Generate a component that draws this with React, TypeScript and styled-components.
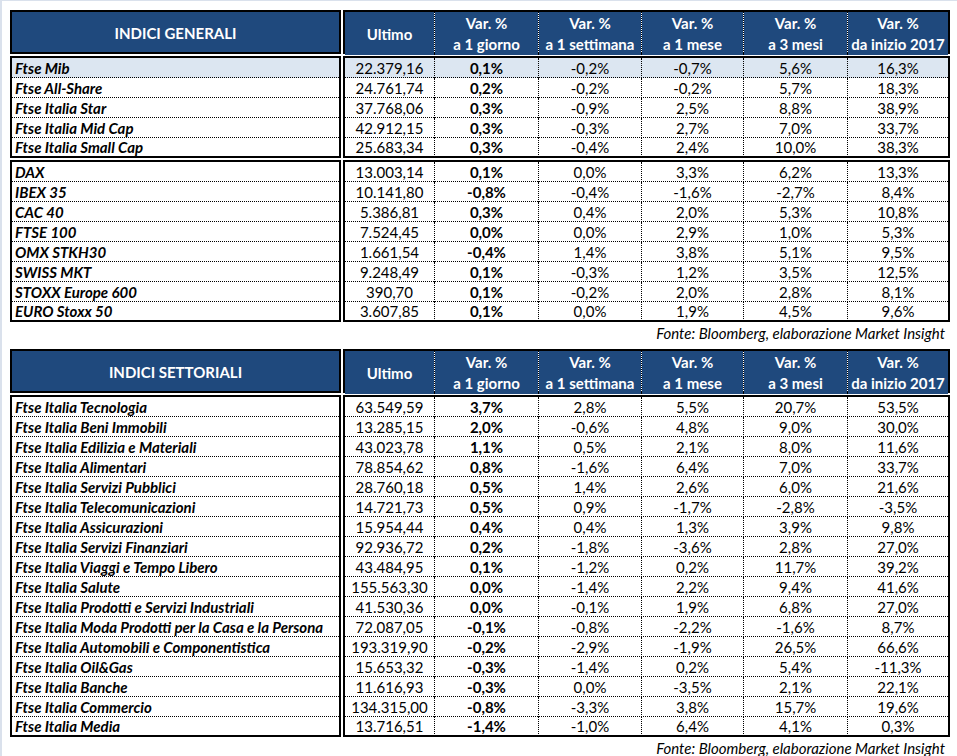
import styled, { createGlobalStyle } from 'styled-components';

const GlobalStyle = createGlobalStyle`
  body {
    margin: 0;
    background: #fff;
    font-family: Lato, "Open Sans", sans-serif;
    color: #000;
  }
`;

type Row = [string, string, string, string, string, string, string];

const generali: Row[] = [
  ['Ftse Mib', '22.379,16', '0,1%', '-0,2%', '-0,7%', '5,6%', '16,3%'],
  ['Ftse All-Share', '24.761,74', '0,2%', '-0,2%', '-0,2%', '5,7%', '18,3%'],
  ['Ftse Italia Star', '37.768,06', '0,3%', '-0,9%', '2,5%', '8,8%', '38,9%'],
  ['Ftse Italia Mid Cap', '42.912,15', '0,3%', '-0,3%', '2,7%', '7,0%', '33,7%'],
  ['Ftse Italia Small Cap', '25.683,34', '0,3%', '-0,4%', '2,4%', '10,0%', '38,3%'],
];

const esteri: Row[] = [
  ['DAX', '13.003,14', '0,1%', '0,0%', '3,3%', '6,2%', '13,3%'],
  ['IBEX 35', '10.141,80', '-0,8%', '-0,4%', '-1,6%', '-2,7%', '8,4%'],
  ['CAC 40', '5.386,81', '0,3%', '0,4%', '2,0%', '5,3%', '10,8%'],
  ['FTSE 100', '7.524,45', '0,0%', '0,0%', '2,9%', '1,0%', '5,3%'],
  ['OMX STKH30', '1.661,54', '-0,4%', '1,4%', '3,8%', '5,1%', '9,5%'],
  ['SWISS MKT', '9.248,49', '0,1%', '-0,3%', '1,2%', '3,5%', '12,5%'],
  ['STOXX Europe 600', '390,70', '0,1%', '-0,2%', '2,0%', '2,8%', '8,1%'],
  ['EURO Stoxx 50', '3.607,85', '0,1%', '0,0%', '1,9%', '4,5%', '9,6%'],
];

const settoriali: Row[] = [
  ['Ftse Italia Tecnologia', '63.549,59', '3,7%', '2,8%', '5,5%', '20,7%', '53,5%'],
  ['Ftse Italia Beni Immobili', '13.285,15', '2,0%', '-0,6%', '4,8%', '9,0%', '30,0%'],
  ['Ftse Italia Edilizia e Materiali', '43.023,78', '1,1%', '0,5%', '2,1%', '8,0%', '11,6%'],
  ['Ftse Italia Alimentari', '78.854,62', '0,8%', '-1,6%', '6,4%', '7,0%', '33,7%'],
  ['Ftse Italia Servizi Pubblici', '28.760,18', '0,5%', '1,4%', '2,6%', '6,0%', '21,6%'],
  ['Ftse Italia Telecomunicazioni', '14.721,73', '0,5%', '0,9%', '-1,7%', '-2,8%', '-3,5%'],
  ['Ftse Italia Assicurazioni', '15.954,44', '0,4%', '0,4%', '1,3%', '3,9%', '9,8%'],
  ['Ftse Italia Servizi Finanziari', '92.936,72', '0,2%', '-1,8%', '-3,6%', '2,8%', '27,0%'],
  ['Ftse Italia Viaggi e Tempo Libero', '43.484,95', '0,1%', '-1,2%', '0,2%', '11,7%', '39,2%'],
  ['Ftse Italia Salute', '155.563,30', '0,0%', '-1,4%', '2,2%', '9,4%', '41,6%'],
  ['Ftse Italia Prodotti e Servizi Industriali', '41.530,36', '0,0%', '-0,1%', '1,9%', '6,8%', '27,0%'],
  ['Ftse Italia Moda Prodotti per la Casa e la Persona', '72.087,05', '-0,1%', '-0,8%', '-2,2%', '-1,6%', '8,7%'],
  ['Ftse Italia Automobili e Componentistica', '193.319,90', '-0,2%', '-2,9%', '-1,9%', '26,5%', '66,6%'],
  ['Ftse Italia Oil&Gas', '15.653,32', '-0,3%', '-1,4%', '0,2%', '5,4%', '-11,3%'],
  ['Ftse Italia Banche', '11.616,93', '-0,3%', '0,0%', '-3,5%', '2,1%', '22,1%'],
  ['Ftse Italia Commercio', '134.315,00', '-0,8%', '-3,3%', '3,8%', '15,7%', '19,6%'],
  ['Ftse Italia Media', '13.716,51', '-1,4%', '-1,0%', '6,4%', '4,1%', '0,3%'],
];

const colHeads: [string, string][] = [
  ['Var. %', 'a 1 giorno'],
  ['Var. %', 'a 1 settimana'],
  ['Var. %', 'a 1 mese'],
  ['Var. %', 'a 3 mesi'],
  ['Var. %', 'da inizio 2017'],
];

const COLS = '89px 104px 103px 102px 104px 101px';

const Page = styled.div`
  min-height: 755px;
  box-sizing: border-box;
  border-top: 1px solid #dae1ec;
  border-left: 2px solid #dae1ec;
  padding: 9px 0 0 8px;
`;

const Sheet = styled.div`
  display: flex;
  flex-direction: column;
  width: 940px;
  font-size: 15px;
`;

const TableGrid = styled.div`
  display: grid;
  grid-template-columns: 331px 607px;
  gap: 2px;
`;

const Box = styled.div<{ $header?: boolean }>`
  border: 2px solid #000;
  background: ${p => (p.$header ? '#1f497d' : '#fff')};
  display: flex;
  flex-direction: column;
`;

const HeaderTitle = styled.div`
  height: 40px;
  display: flex;
  align-items: center;
  justify-content: center;
  padding-top: 1px;
  box-sizing: border-box;
  color: #fff;
  font-weight: 700;
`;

const HeaderGrid = styled.div`
  display: grid;
  grid-template-columns: ${COLS};
  height: 40px;
  background: #fff;
`;

const HeadCell = styled.div<{ $first?: boolean }>`
  display: flex;
  flex-direction: column;
  align-items: center;
  justify-content: center;
  padding-top: 1px;
  color: #fff;
  font-weight: 700;
  line-height: 21px;
  background: #1f497d;
  background-clip: padding-box;
  border-left: ${p => (p.$first ? 'none' : '1px dotted #000')};
`;

const NameRow = styled.div<{ $hl?: boolean }>`
  height: 20px;
  box-sizing: border-box;
  border-bottom: 1px dotted #000;
  background: ${p => (p.$hl ? '#dce6f1' : '#fff')};
  padding-left: 3px;
  font-weight: 700;
  font-style: italic;
  line-height: 20px;
  white-space: nowrap;
  &:last-child {
    border-bottom: none;
    height: 18px;
    line-height: 19px;
  }
`;

const DataRow = styled.div<{ $hl?: boolean }>`
  display: grid;
  grid-template-columns: ${COLS};
  height: 20px;
  box-sizing: border-box;
  border-bottom: 1px dotted #000;
  background: ${p => (p.$hl ? '#dce6f1' : '#fff')};
  line-height: 20px;
  &:last-child {
    border-bottom: none;
    height: 18px;
    line-height: 19px;
  }
`;

const Cell = styled.div<{ $first?: boolean; $bold?: boolean }>`
  text-align: center;
  font-weight: ${p => (p.$bold ? 700 : 400)};
  border-left: ${p => (p.$first ? 'none' : '1px dotted #000')};
`;

const Source = styled.div`
  height: 27px;
  line-height: 23px;
  text-align: right;
  padding-right: 5px;
  font-style: italic;
`;

function HeaderBlock({ title }: { title: string }) {
  return (
    <>
      <Box $header>
        <HeaderTitle>{title}</HeaderTitle>
      </Box>
      <Box $header>
        <HeaderGrid>
          <HeadCell $first>Ultimo</HeadCell>
          {colHeads.map(([a, b]) => (
            <HeadCell key={b}>
              <span>{a}</span>
              <span>{b}</span>
            </HeadCell>
          ))}
        </HeaderGrid>
      </Box>
    </>
  );
}

function BodyBlock({ rows, highlight }: { rows: Row[]; highlight?: number }) {
  return (
    <>
      <Box>
        {rows.map((r, i) => (
          <NameRow key={r[0]} $hl={i === highlight}>{r[0]}</NameRow>
        ))}
      </Box>
      <Box>
        {rows.map((r, i) => (
          <DataRow key={r[0]} $hl={i === highlight}>
            {r.slice(1).map((v, j) => (
              <Cell key={j} $first={j === 0} $bold={j === 1}>{v}</Cell>
            ))}
          </DataRow>
        ))}
      </Box>
    </>
  );
}

export default function App() {
  return (
    <Page>
      <GlobalStyle />
      <Sheet>
        <TableGrid>
          <HeaderBlock title="INDICI GENERALI" />
          <BodyBlock rows={generali} highlight={0} />
          <BodyBlock rows={esteri} />
        </TableGrid>
        <Source>Fonte: Bloomberg, elaborazione Market Insight</Source>
        <TableGrid>
          <HeaderBlock title="INDICI SETTORIALI" />
          <BodyBlock rows={settoriali} />
        </TableGrid>
        <Source>Fonte: Bloomberg, elaborazione Market Insight</Source>
      </Sheet>
    </Page>
  );
}
